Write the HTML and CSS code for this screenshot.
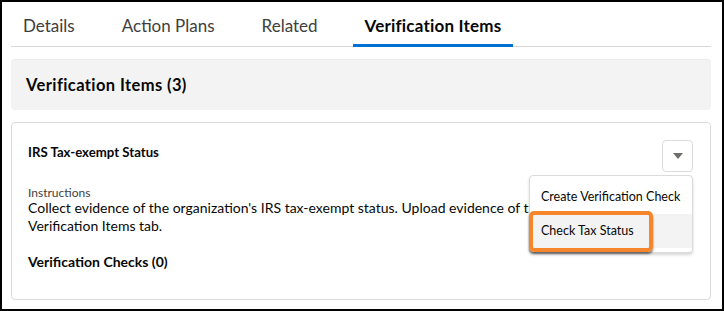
FILE: index.html
```html
<!DOCTYPE html>
<html lang="en">
<head>
  <meta charset="UTF-8" />
  <meta name="viewport" content="width=device-width, initial-scale=1.0" />
  <title>Verification Items</title>
  <link rel="stylesheet" href="styles.css">
</head>
<body>
  <div class="frame">
    <nav class="tabs">
      <a class="tab">Details</a>
      <a class="tab">Action Plans</a>
      <a class="tab">Related</a>
      <a class="tab active">Verification Items</a>
    </nav>

    <div class="list-header">
      <h2>Verification Items (3)</h2>
    </div>

    <section class="card">
      <div class="card-head">
        <h3>IRS Tax-exempt Status</h3>
        <div class="dropdown">
          <button class="menu-button" aria-label="Show actions">
            <svg width="10" height="6" viewBox="0 0 10 6"><path d="M0 0h10L5 6z" fill="#706e6b"/></svg>
          </button>
          <ul class="menu">
            <li class="menu-item">Create Verification Check</li>
            <li class="menu-item hover">Check Tax Status<span class="callout"></span></li>
          </ul>
        </div>
      </div>
      <div class="field">
        <span class="field-label">Instructions</span>
        <p class="field-value">Collect evidence of the organization's IRS tax-exempt status. Upload evidence of this status to the Verification Items tab.</p>
      </div>
      <h4>Verification Checks (0)</h4>
    </section>
  </div>
</body>
</html>
```

FILE: styles.css
```css
* {
  box-sizing: border-box;
}
body {
  margin: 0;
  font-family: Lato, "Noto Sans", sans-serif;
  color: #080707;
  background: #fff;
}
.frame {
  height: 311px;
  border: 2px solid #000;
  padding: 0 11px 0 9px;
}
.tabs {
  display: flex;
  gap: 23px;
  border-bottom: 1px solid #d8d8d8;
}
.tab {
  padding: 4px 12px 0;
  line-height: 40px;
  font-size: 17px;
  color: #3e3e3c;
  cursor: pointer;
}
.tab.active {
  font-weight: 700;
  letter-spacing: 0.2px;
  color: #080707;
  margin-bottom: -1px;
  box-shadow: inset 0 -3px 0 #0070d2;
}
.list-header {
  margin-top: 12px;
  height: 51px;
  padding: 0 15px;
  display: flex;
  align-items: center;
  background: #f3f3f3;
  border-top: 1px solid #ebebeb;
  border-radius: 4px;
}
.list-header h2 {
  margin: 0;
  font-size: 16.5px;
  letter-spacing: 0.4px;
  font-weight: 700;
}
.card {
  margin-top: 12px;
  height: 178px;
  border: 1px solid #dddbda;
  border-radius: 4px;
  padding: 17px 17px 0 16px;
}
.card-head {
  display: flex;
  justify-content: space-between;
  align-items: flex-start;
}
.card-head h3 {
  margin: 2px 0 0;
  font-size: 13.2px;
  line-height: 20px;
  font-weight: 700;
}
.dropdown {
  position: relative;
}
.menu-button {
  display: flex;
  align-items: center;
  justify-content: center;
  width: 31px;
  height: 32px;
  padding: 0;
  background: #fff;
  border: 1px solid #dddbda;
  border-radius: 4px;
}
.menu {
  position: absolute;
  right: 0;
  top: 35px;
  width: 164px;
  margin: 0;
  padding: 4px 0;
  list-style: none;
  background: #fff;
  border: 1px solid #dddbda;
  border-radius: 4px;
  box-shadow: 0 2px 3px rgba(0, 0, 0, 0.16);
  z-index: 2;
}
.menu-item {
  position: relative;
  height: 34px;
  line-height: 34px;
  padding: 0 11px;
  font-size: 12.5px;
  color: #080707;
  white-space: nowrap;
}
.menu-item.hover {
  background: #f3f3f3;
}
.callout {
  position: absolute;
  left: -1px;
  top: -3px;
  width: 124px;
  height: 41px;
  border: 4px solid #f5862b;
  border-radius: 5px;
  box-shadow: 0 2px 2px rgba(0, 0, 0, 0.55);
}
.field {
  margin-top: 14px;
}
.field-label {
  display: block;
  font-size: 12px;
  line-height: 13px;
  color: #3e3e3c;
}
.field-value {
  margin: 0;
  font-size: 14px;
  line-height: 18px;
}
.card h4 {
  margin: 18px 0 0;
  font-size: 14px;
  font-weight: 700;
}
```
